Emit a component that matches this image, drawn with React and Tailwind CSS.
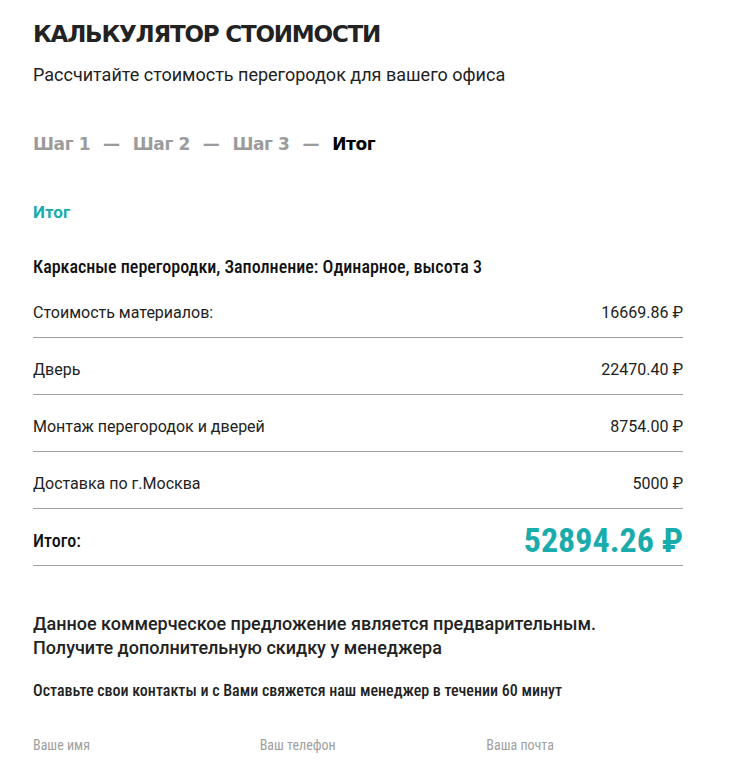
export default function App() {
  const rows = [
    ["Стоимость материалов:", "16669.86 ₽"],
    ["Дверь", "22470.40 ₽"],
    ["Монтаж перегородок и дверей", "8754.00 ₽"],
    ["Доставка по г.Москва", "5000 ₽"],
  ];
  const head = { fontFamily: '"DejaVu Sans", sans-serif' };
  const cond = { fontFamily: '"Roboto Condensed", "Liberation Sans Narrow", Roboto, sans-serif' };
  return (
    <div className="bg-white min-h-[761px] w-[749px] overflow-hidden pl-[33px] pr-[66px] pt-[20px]" style={{ fontFamily: 'Roboto, sans-serif' }}>
      <h1 className="text-[23px] leading-[28px] font-bold text-[#222] tracking-[-1.2px]" style={head}>КАЛЬКУЛЯТОР СТОИМОСТИ</h1>
      <p className="mt-[16px] text-[18px] leading-[22px] text-[#222]">Рассчитайте стоимость перегородок для вашего офиса</p>
      <div className="mt-[46px] flex items-center gap-[13px] text-[17px] leading-[24px] font-bold tracking-[-0.4px]" style={head}>
        <span className="text-[#9b9b9b]">Шаг 1</span>
        <span className="text-[#9b9b9b]">—</span>
        <span className="text-[#9b9b9b]">Шаг 2</span>
        <span className="text-[#9b9b9b]">—</span>
        <span className="text-[#9b9b9b]">Шаг 3</span>
        <span className="text-[#9b9b9b]">—</span>
        <span className="text-black">Итог</span>
      </div>
      <div className="mt-[45px] text-[17px] leading-[22px] font-bold text-[#1aabab]">Итог</div>
      <div className="mt-[33px] text-[18px] leading-[22px] font-medium text-[#111]" style={cond}>Каркасные перегородки, Заполнение: Одинарное, высота 3</div>
      <div className="mt-[3px]">
        {rows.map(([l, v]) => (
          <div key={l} className="flex items-center justify-between h-[57px] pt-[7px] border-b border-[#a0a0a0] text-[16px] text-[#222]">
            <span>{l}</span>
            <span>{v}</span>
          </div>
        ))}
        <div className="flex items-center justify-between h-[57px] pt-[7px] border-b border-[#a0a0a0]">
          <span className="text-[18px] font-medium text-[#111]" style={cond}>Итого:</span>
          <span className="text-[34px] font-bold text-[#1aabab]" style={cond}>52894.26 ₽</span>
        </div>
      </div>
      <div className="mt-[46px] text-[18px] leading-[24px] font-medium text-[#222]">
        <div>Данное коммерческое предложение является предварительным.</div>
        <div>Получите дополнительную скидку у менеджера</div>
      </div>
      <div className="mt-[21px] text-[16px] leading-[20px] font-medium text-[#222]" style={cond}>Оставьте свои контакты и с Вами свяжется наш менеджер в течении 60 минут</div>
      <div className="mt-[35px] grid grid-cols-3 gap-[30px] text-[14px] leading-[18px] text-[#a0a0a0]" style={cond}>
        <span>Ваше имя</span>
        <span>Ваш телефон</span>
        <span>Ваша почта</span>
      </div>
    </div>
  );
}
